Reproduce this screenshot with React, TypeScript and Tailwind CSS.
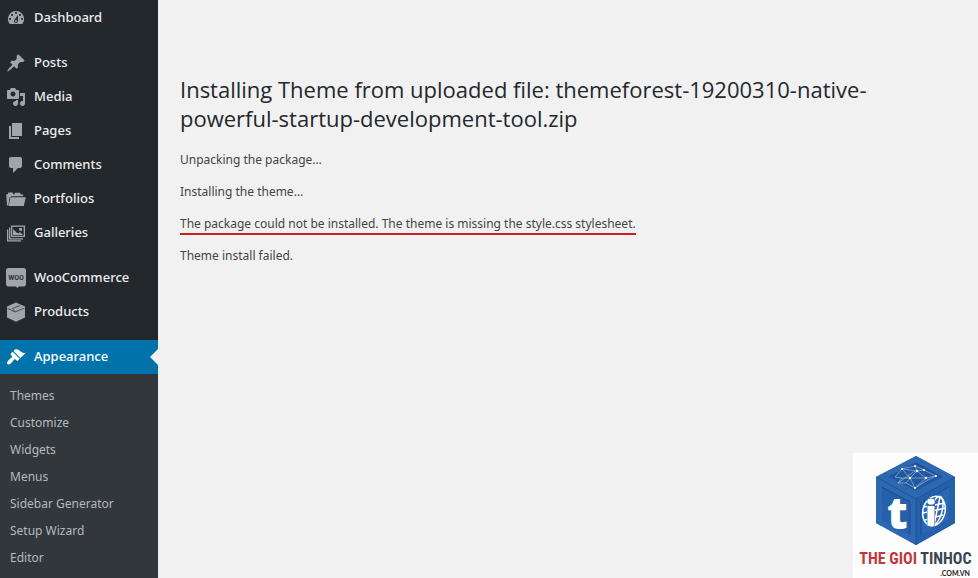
import type { ReactNode } from "react";

type IconProps = { children: ReactNode };

function Icon({ children }: IconProps) {
  return (
    <svg viewBox="0 0 20 20" className="h-5 w-5 shrink-0 fill-current" aria-hidden="true">
      {children}
    </svg>
  );
}

const icons = {
  dashboard: (
    <path
      fillRule="evenodd"
      d="M3.76 16h12.48A7.998 7.998 0 0 0 10 3a7.998 7.998 0 0 0-6.24 13zM10 4c.55 0 1 .45 1 1s-.45 1-1 1-1-.45-1-1 .45-1 1-1zM6 6c.55 0 1 .45 1 1s-.45 1-1 1-1-.45-1-1 .45-1 1-1zm8 0c.55 0 1 .45 1 1s-.45 1-1 1-1-.45-1-1 .45-1 1-1zm-5.37 5.55L12 7v6c0 1.1-.9 2-2 2s-2-.9-2-2c0-.57.24-1.08.63-1.45zM4 10c.55 0 1 .45 1 1s-.45 1-1 1-1-.45-1-1 .45-1 1-1zm12 0c.55 0 1 .45 1 1s-.45 1-1 1-1-.45-1-1 .45-1 1-1zm-5 3c0-.55-.45-1-1-1s-1 .45-1 1 .45 1 1 1 1-.45 1-1z"
    />
  ),
  posts: (
    <path d="M10.44 3.02l1.82-1.82 6.36 6.35-1.83 1.82c-1.05-.68-2.48-.57-3.41.36l-.75.75c-.92.93-1.04 2.35-.35 3.41l-1.83 1.82-2.41-2.41-2.8 2.79c-.42.42-3.38 2.71-3.8 2.29s1.86-3.39 2.28-3.81l2.79-2.79L4.1 9.36l1.83-1.82c1.05.69 2.48.57 3.4-.36l.75-.75c.93-.92 1.05-2.35.36-3.41z" />
  ),
  media: (
    <path
      fillRule="evenodd"
      d="M13 11V4c0-.55-.45-1-1-1h-1.67L9 1H5L3.67 3H2c-.55 0-1 .45-1 1v7c0 .55.45 1 1 1h10c.55 0 1-.45 1-1zM7 4.5c1.38 0 2.5 1.12 2.5 2.5S8.38 9.5 7 9.5 4.5 8.38 4.5 7 5.62 4.5 7 4.5zM14 6h5v10.5c0 1.38-1.12 2.5-2.5 2.5S14 17.88 14 16.5s1.12-2.5 2.5-2.5c.17 0 .34.02.5.05V9h-3V6zm-4 8.05V13h2v3.5c0 1.38-1.12 2.5-2.5 2.5S7 17.88 7 16.5 8.12 14 9.5 14c.17 0 .34.02.5.05z"
    />
  ),
  pages: <path d="M6 15V2h10v13H6zm-1 1h8v2H3V5h2v11z" />,
  comments: (
    <path d="M5 2h9c1.1 0 2 .9 2 2v7c0 1.1-.9 2-2 2h-2l-5 5v-5H5c-1.1 0-2-.9-2-2V4c0-1.1.9-2 2-2z" />
  ),
  portfolios: (
    <>
      <path d="M1 16.5L.2 5.2h1.6l.5-1.6h4.3l.8 1.6h1.2L9 3.8h5l.8 1.6h2.3l.2 1.8H5.4L3.4 9l-1 7.5z" />
      <path d="M4.4 8.2h15.4l-2 8.8H2.6z" />
    </>
  ),
  galleries: (
    <>
      <path fillRule="evenodd" d="M5 2.5h14V14H5zM6.3 3.8v8.9h11.4V3.8z" />
      <path d="M3 4.5h1.3v10.7H17v1.3H3zM1 6.5h1.3v10.7H15v1.3H1z" />
      <path d="M7 12V6l3.600 3.600 2 .8L14 9l3 3zM13.200 5H16v2.800h-2.800z" />
    </>
  ),
  woo: (
    <>
      <path d="M2.2 0h15.600C19 0 20 1 20 2.200v14c0 1.200-1 2.200-2.200 2.200H13L11.400 20l-1.600-1.600H2.200C1 18.400 0 17.400 0 16.200v-14C0 1 1 0 2.200 0z" />
      <text
        x="10"
        y="12"
        textAnchor="middle"
        className="fill-[#23282d] font-['Roboto_Condensed','Open_Sans',sans-serif] text-[8px] font-medium"
      >
        WOO
      </text>
    </>
  ),
  products: (
    <>
      <path d="M10 .4l9 4.2v10.800L10 19.800l-9-4.400V4.600z" />
      <path
        d="M1.600 6.400L9 10l9.400-4M9 10L6.500 6.500 14 3.500"
        fill="none"
        stroke="#4a4f54"
        strokeWidth="1"
      />
    </>
  ),
  appearance: (
    <path d="M14.48 11.06L7.41 3.99l1.5-1.5c.5-.56 2.3-.47 3.51.32 1.21.8 1.43 1.28 2.91 2.1 1.18.64 2.45 1.26 4.45.85zm-.71.71L6.7 4.7 4.93 6.47c-.39.39-.39 1.02 0 1.41l1.06 1.06c.39.39.39 1.03 0 1.42-.6.6-1.43 1.11-2.21 1.69-.35.26-.7.53-1.01.84C1.43 14.23.4 16.08 1.4 17.07c.99 1 2.84-.03 4.18-1.36.31-.31.58-.66.85-1.02.57-.78 1.08-1.61 1.69-2.21.39-.39 1.02-.39 1.41 0l1.06 1.06c.39.39 1.02.39 1.41 0z" />
  ),
};

const navGroups = [
  [{ name: "Dashboard", icon: icons.dashboard }],
  [
    { name: "Posts", icon: icons.posts },
    { name: "Media", icon: icons.media },
    { name: "Pages", icon: icons.pages },
    { name: "Comments", icon: icons.comments },
    { name: "Portfolios", icon: icons.portfolios },
    { name: "Galleries", icon: icons.galleries },
  ],
  [
    { name: "WooCommerce", icon: icons.woo },
    { name: "Products", icon: icons.products },
  ],
];

const appearanceItems = [
  "Themes",
  "Customize",
  "Widgets",
  "Menus",
  "Sidebar Generator",
  "Setup Wizard",
  "Editor",
];

function Sidebar() {
  return (
    <nav className="w-[158px] shrink-0 bg-[#23282d] pt-px text-[13px] font-medium text-[#eee]">
      <div className="flex flex-col gap-[11px]">
        {navGroups.map((group) => (
          <ul key={group[0].name}>
            {group.map((item) => (
              <li key={item.name}>
                <a href="#" className="flex h-[34px] items-center gap-2 px-1.5 hover:text-[#00b9eb]">
                  <span className="text-[#a0a5aa]">
                    <Icon>{item.icon}</Icon>
                  </span>
                  {item.name}
                </a>
              </li>
            ))}
          </ul>
        ))}
        <div>
          <a
            href="#"
            aria-current="page"
            className="relative flex h-[34px] items-center gap-2 bg-[#0073aa] px-1.5 text-white"
          >
            <Icon>{icons.appearance}</Icon>
            Appearance
            <span className="absolute top-1/2 right-0 -translate-y-1/2 border-8 border-transparent border-r-[#f1f1f1]" />
          </a>
          <ul className="bg-[#32373c] py-2 text-xs font-normal text-[#b4b9be]">
            {appearanceItems.map((name) => (
              <li key={name}>
                <a href="#" className="flex h-[27px] items-center px-2.5 hover:text-[#00b9eb]">
                  {name}
                </a>
              </li>
            ))}
          </ul>
        </div>
      </div>
    </nav>
  );
}

function CubeLogo() {
  return (
    <svg viewBox="0 0 84 96" className="h-24 w-[84px]" aria-hidden="true">
      <path d="M42 3L81 24v46L42 92 2 70V24z" fill="#2560aa" />
      <path d="M42 3L81 24 42 46 2 24z" fill="#2d69b3" />
      <path d="M42 10L68 24 42 38 15 24z" fill="#2258a0" />
      <path d="M2 24l40 22v46L2 70z" fill="#2d69b3" />
      <path d="M8 34l28 15v33L8 67z" fill="#2660aa" />
      <path d="M81 24L42 46v46l39-22z" fill="#2660aa" />
      <path d="M75 34L47 50v32l28-16z" fill="#2b67b2" />
      <path
        d="M8 34l28 15v33M75 34L47 50v32M15 24l27-14 26 14"
        fill="none"
        stroke="#1b4c8d"
        strokeWidth="1"
      />
      <path d="M2 24l40 22 39-22M42 46v46" fill="none" stroke="#1d4f92" strokeWidth="0.8" />
      <g fill="none" stroke="#c9dbf0" strokeWidth="0.5">
        <path d="M21 24l7-8 13-3 9 4 12 6-10 5-11 7-9-5-8 0 4-5-7-1zM28 16l8 9 7-7 9 7 10-2M41 13l2 5M32 30l4-5 16 0-11 10-5-10-8 0M50 17l-7 1-15-2M24 30l17-12" />
      </g>
      <g fill="#fff">
        <circle cx="28" cy="16" r="1" />
        <circle cx="41" cy="13" r="1" />
        <circle cx="50" cy="17" r="1" />
        <circle cx="43" cy="18" r="1.2" />
        <circle cx="36" cy="25" r="1.2" />
        <circle cx="52" cy="25" r="1.2" />
        <circle cx="62" cy="23" r="1" />
        <circle cx="41" cy="35" r="1" />
      </g>
      <text
        x="13"
        y="76"
        fill="#fff"
        className="font-['Open_Sans',sans-serif] text-[45px] font-extrabold"
      >
        t
      </text>
      <g fill="none" stroke="#fff" strokeWidth="1.5">
        <ellipse cx="60" cy="58" rx="11" ry="15" transform="rotate(16 60 58)" />
        <ellipse cx="62" cy="58" rx="6" ry="15" transform="rotate(16 62 58)" />
        <path d="M66 44l-6 28M50 54l21-4M49 60l23-5M51 67l18-5" />
      </g>
      <path d="M53 45h8v28h-8z" fill="#2b67b2" />
      <text
        x="51"
        y="73"
        fill="#fff"
        className="font-['Open_Sans',sans-serif] text-[36px] font-extrabold"
      >
        i
      </text>
    </svg>
  );
}

function Watermark() {
  return (
    <div className="fixed right-0 bottom-0 flex h-[125px] w-[125px] flex-col items-center bg-[#fdfdfd]">
      <CubeLogo />
      <p className="font-['Roboto_Condensed','Liberation_Sans',sans-serif] text-base leading-5 font-bold whitespace-nowrap text-[#3b4750]">
        <span className="text-[#c1383d]">THE GIOI</span> TINHOC
      </p>
      <p className="self-end pr-2 font-['Lato',sans-serif] text-[7px] leading-2 font-bold text-[#222]">
        .COM.VN
      </p>
    </div>
  );
}

export default function App() {
  return (
    <div className="flex min-h-screen bg-[#f1f1f1] font-['Noto_Sans','Open_Sans',sans-serif]">
      <Sidebar />
      <main className="min-w-0 flex-1 px-[22px] pt-[75px] text-xs leading-5 text-[#444]">
        <h1 className="max-w-[720px] font-['Open_Sans',sans-serif] text-[22px] leading-[29px] text-[#23282d]">
          Installing Theme from uploaded file: themeforest-19200310-native-powerful-startup-development-tool.zip
        </h1>
        <div className="mt-[17px] flex flex-col items-start gap-3">
          <p>Unpacking the package…</p>
          <p>Installing the theme…</p>
          <p className="relative">
            The package could not be installed. The theme is missing the style.css stylesheet.
            <span className="absolute inset-x-0 -bottom-px h-0.5 bg-[#cb1f27]" />
          </p>
          <p>Theme install failed.</p>
        </div>
      </main>
      <Watermark />
    </div>
  );
}
